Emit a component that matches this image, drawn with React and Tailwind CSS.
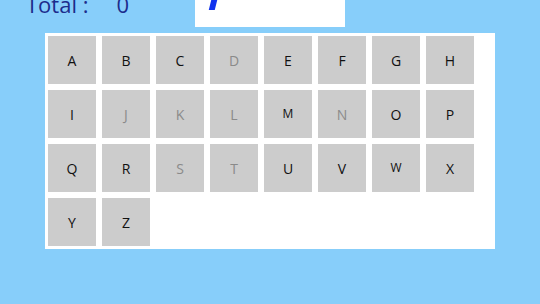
import React from 'react';

const letters = [
    { ch: 'A' }, { ch: 'B' }, { ch: 'C' }, { ch: 'D', off: true },
    { ch: 'E' }, { ch: 'F' }, { ch: 'G' }, { ch: 'H' },
    { ch: 'I' }, { ch: 'J', off: true }, { ch: 'K', off: true }, { ch: 'L', off: true },
    { ch: 'M', small: true }, { ch: 'N', off: true }, { ch: 'O' }, { ch: 'P' },
    { ch: 'Q' }, { ch: 'R' }, { ch: 'S', off: true }, { ch: 'T', off: true },
    { ch: 'U' }, { ch: 'V' }, { ch: 'W', small: true }, { ch: 'X' },
    { ch: 'Y' }, { ch: 'Z' },
];

function App() {
    return (
        <div className="w-[540px] h-[304px] bg-[#87cefa] overflow-hidden" style={{ fontFamily: '"Open Sans", "Noto Sans", sans-serif' }}>
            <div className="flex h-[27px] items-start">
                <div className="flex w-[195px] pl-[26px] -mt-[10px] text-[22px] leading-[28px] text-[#1c2c8c]">
                    <span>Total :</span>
                    <span className="ml-[28px]">0</span>
                </div>
                <div className="w-[150px] h-[27px] bg-white overflow-hidden pl-[15px]">
                    <div className="w-[6px] h-[10px] bg-[#1133ee] skew-x-[-14deg]" />
                </div>
            </div>
            <div className="ml-[45px] mt-[6px] w-[450px] h-[216px] bg-white p-[3px]">
                <div className="flex flex-wrap gap-[6px] w-[432px]">
                    {letters.map((l) => (
                        <LetterKey key={l.ch} {...l} />
                    ))}
                </div>
            </div>
        </div>
    );
}

function LetterKey({ ch, off, small }) {
    return (
        <div className={`w-[48px] h-[48px] bg-[#cccccc] flex items-center justify-center ${small ? 'text-[12px]' : 'text-[14px]'} ${off ? 'text-[#8a8a8a]' : 'text-[#111111]'}`}>
            {ch}
        </div>
    );
}

export default App;
